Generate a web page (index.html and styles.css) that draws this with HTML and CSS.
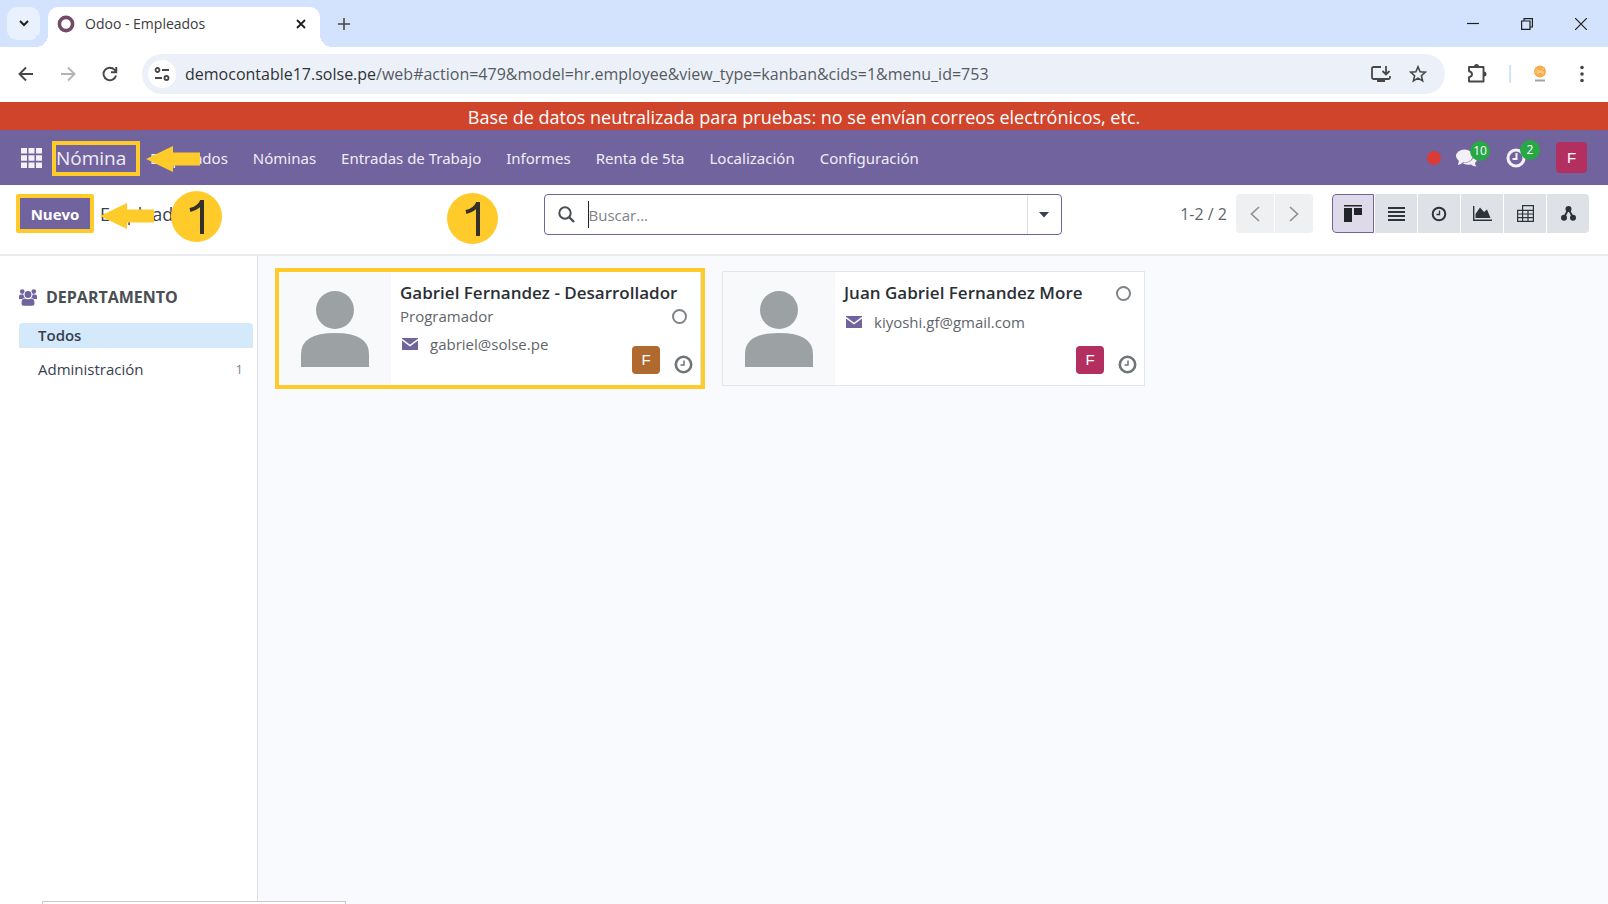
FILE: index.html
```html
<!DOCTYPE html>
<html lang="es">
  <head>
    <meta charset="UTF-8" />
    <meta name="viewport" content="width=device-width, initial-scale=1.0" />
    <title>Odoo - Empleados</title>
    <link rel="stylesheet" href="styles.css">
  </head>
  <body>
    <div class="tab-strip">
      <button class="tab-search" aria-label="Buscar pestañas">
        <svg width="10" height="7" viewBox="0 0 10 7"><path d="M1 1l4 4 4-4" fill="none" stroke="#1f1f1f" stroke-width="2"/></svg>
      </button>
      <div class="tab">
        <svg width="18" height="18" viewBox="0 0 18 18"><circle cx="9" cy="9" r="6.6" fill="none" stroke="#714b67" stroke-width="3.6"/></svg>
        <span class="tab-title">Odoo - Empleados</span>
        <button class="icon-button" aria-label="Cerrar pestaña">
          <svg width="10" height="10" viewBox="0 0 10 10"><path d="M1 1l8 8M9 1L1 9" stroke="#1f1f1f" stroke-width="1.8"/></svg>
        </button>
      </div>
      <button class="icon-button new-tab" aria-label="Nueva pestaña">
        <svg width="12" height="12" viewBox="0 0 12 12"><path d="M6 0v12M0 6h12" stroke="#474747" stroke-width="1.6"/></svg>
      </button>
      <div class="window-controls">
        <button class="icon-button" aria-label="Minimizar">
          <svg width="12" height="12" viewBox="0 0 12 12"><path d="M0 5.5h12" stroke="#1f1f1f" stroke-width="1.2"/></svg>
        </button>
        <button class="icon-button" aria-label="Restaurar">
          <svg width="12" height="12" viewBox="0 0 12 12"><path d="M.6 3h8.4v8.4H.6zM3 3V.6h8.4V9H9" fill="none" stroke="#1f1f1f" stroke-width="1.2"/></svg>
        </button>
        <button class="icon-button" aria-label="Cerrar">
          <svg width="12" height="12" viewBox="0 0 12 12"><path d="M0 0l12 12M12 0L0 12" stroke="#1f1f1f" stroke-width="1.2"/></svg>
        </button>
      </div>
    </div>

    <div class="toolbar">
      <div class="toolbar-nav">
        <button class="icon-button" aria-label="Atrás">
          <svg width="16" height="16" viewBox="0 0 16 16"><path d="M15 8H2M8 1.5L1.5 8 8 14.5" fill="none" stroke="#474747" stroke-width="1.9"/></svg>
        </button>
        <button class="icon-button" aria-label="Adelante">
          <svg width="16" height="16" viewBox="0 0 16 16"><path d="M1 8h13M8 1.5L14.5 8 8 14.5" fill="none" stroke="#b4b4b4" stroke-width="1.9"/></svg>
        </button>
        <button class="icon-button" aria-label="Recargar">
          <svg width="16" height="16" viewBox="0 0 16 16"><path d="M14 9.5A6.3 6.3 0 1 1 12.6 3.8L14 5.4M14.3 1v5.2H9" fill="none" stroke="#474747" stroke-width="1.9"/></svg>
        </button>
      </div>
      <div class="address-bar">
        <button class="site-info" aria-label="Información del sitio">
          <svg width="16" height="14" viewBox="0 0 16 14"><g fill="none" stroke="#474747" stroke-width="1.8"><circle cx="3.5" cy="3" r="2"/><path d="M8 3h7M1 11h7"/><circle cx="12.5" cy="11" r="2"/></g></svg>
        </button>
        <div class="url">democontable17.solse.pe<span class="url-path">/web#action=479&amp;model=hr.employee&amp;view_type=kanban&amp;cids=1&amp;menu_id=753</span></div>
        <button class="icon-button" aria-label="Instalar">
          <svg width="20" height="18" viewBox="0 0 20 18"><g fill="none" stroke="#474747" stroke-width="1.8"><path d="M10 2H2.5Q1 2 1 3.5v9Q1 14 2.5 14h15Q19 14 19 12.5V11M15 1v8M11.5 6L15 9.4 18.5 6"/></g><path d="M6 14h8v3H6z" fill="#474747"/></svg>
        </button>
        <button class="icon-button" aria-label="Marcador">
          <svg width="18" height="18" viewBox="0 0 18 18"><path d="M9 1.8l2.1 4.9 5.3.5-4 3.5 1.2 5.2L9 13.1l-4.6 2.8 1.2-5.2-4-3.5 5.3-.5z" fill="none" stroke="#474747" stroke-width="1.6"/></svg>
        </button>
      </div>
      <div class="toolbar-end">
        <button class="icon-button" aria-label="Extensiones">
          <svg width="20" height="20" viewBox="0 0 20 20"><path d="M2 3h14.5v14.5H2v-4.3q3-.7 3-3T2 7.2z" fill="none" stroke="#474747" stroke-width="1.9" stroke-linejoin="round"/><path d="M7 2.5a2.5 2.5 0 0 1 5 0M17 7.5a2.5 2.5 0 0 1 0 5" fill="#474747"/></svg>
        </button>
        <span class="toolbar-divider"></span>
        <svg width="14" height="18" viewBox="0 0 14 18"><circle cx="7" cy="6.5" r="6" fill="#f6ad4b"/><path d="M3 4l8 5M4 9l7-6M2 7h9" stroke="#fbd090" stroke-width="1"/><path d="M2 15.5h10" stroke="#a3a3a3" stroke-width="2"/></svg>
        <button class="icon-button browser-menu" aria-label="Menú">
          <svg width="4" height="18" viewBox="0 0 4 18"><g fill="#474747"><circle cx="2" cy="2.5" r="1.8"/><circle cx="2" cy="9" r="1.8"/><circle cx="2" cy="15.5" r="1.8"/></g></svg>
        </button>
      </div>
    </div>

    <div class="neutralize-banner">Base de datos neutralizada para pruebas: no se envían correos electrónicos, etc.</div>

    <header class="navbar">
      <button class="icon-button apps" aria-label="Aplicaciones">
        <svg width="21" height="20" viewBox="0 0 21 20"><path d="M0 0h6v5.500H0zM7.500 0h6v5.500h-6zM15 0h6v5.500h-6zM0 7.200h6v5.500H0zM7.500 7.200h6v5.500h-6zM15 7.200h6v5.500h-6zM0 14.500h6V20H0zM7.500 14.500h6V20h-6zM15 14.500h6V20h-6z" fill="#f3f0f8"/></svg>
      </button>
      <a class="brand" href="#">Nómina</a>
      <nav class="menu">
        <a class="menu-item" href="#">Empleados
          <svg class="arrow" width="54" height="26" viewBox="0 0 54 26"><path d="M0 13L27 0v6.5h27v13H27V26z" fill="#ffcb2b"/></svg>
        </a>
        <a class="menu-item" href="#">Nóminas</a>
        <a class="menu-item" href="#">Entradas de Trabajo</a>
        <a class="menu-item" href="#">Informes</a>
        <a class="menu-item" href="#">Renta de 5ta</a>
        <a class="menu-item" href="#">Localización</a>
        <a class="menu-item" href="#">Configuración</a>
      </nav>
      <div class="systray">
        <span class="record-dot"></span>
        <button class="icon-button tray-item" aria-label="Mensajes">
          <svg width="21" height="18" viewBox="0 0 21 18"><g fill="#f3f0f8"><ellipse cx="8.5" cy="7" rx="8.5" ry="6.5"/><path d="M3 11l-1 5q4-1 6-4z"/><path d="M18.5 5.5q2.500 2 2.500 4.500t-2 4q0 2 1.500 3.500-3.500 0-5.500-2-6 .8-8.500-1.500 11 0 12-8.500z"/></g></svg>
          <span class="badge">10</span>
        </button>
        <button class="icon-button tray-item" aria-label="Actividades">
          <svg width="20" height="20" viewBox="0 0 20 20"><g fill="none" stroke="#f3f0f8"><circle cx="10" cy="10" r="8" stroke-width="3"/><path d="M10.5 5v6H6.500" stroke-width="2"/></g></svg>
          <span class="badge">2</span>
        </button>
        <button class="avatar user-avatar">F</button>
      </div>
    </header>

    <div class="control-panel">
      <div class="breadcrumbs">
        <button class="create-button">Nuevo</button>
        <span class="title">Empleados</span>
        <svg class="arrow" width="54" height="26" viewBox="0 0 54 26"><path d="M0 13L27 0v6.5h27v13H27V26z" fill="#ffcb2b"/></svg>
        <span class="step step-create"><svg width="16" height="36" viewBox="0 0 16 36"><path d="M13 1v34M13 2q-3 7-12 9" fill="none" stroke="#33312a" stroke-width="4"/></svg></span>
        <span class="step step-search"><svg width="16" height="36" viewBox="0 0 16 36"><path d="M13 1v34M13 2q-3 7-12 9" fill="none" stroke="#33312a" stroke-width="4"/></svg></span>
      </div>
      <div class="search">
        <svg width="17" height="17" viewBox="0 0 17 17"><circle cx="7" cy="7" r="5.7" fill="none" stroke="#4a4f55" stroke-width="2"/><path d="M11 11l5 5" stroke="#4a4f55" stroke-width="2.4"/></svg>
        <input class="search-input" type="text" placeholder="Buscar..." aria-label="Buscar">
        <button class="search-toggle" aria-label="Filtros">
          <svg width="10" height="6" viewBox="0 0 10 6"><path d="M0 0h10L5 5.5z" fill="#374151"/></svg>
        </button>
      </div>
      <div class="panel-end">
        <span class="pager-value">1-2 / 2</span>
        <div class="pager">
          <button class="pager-button" aria-label="Anterior"><svg width="10" height="16" viewBox="0 0 10 16"><path d="M9 1L1.5 8 9 15" fill="none" stroke="#8f9296" stroke-width="1.7"/></svg></button>
          <button class="pager-button" aria-label="Siguiente"><svg width="10" height="16" viewBox="0 0 10 16"><path d="M1 1l7.5 7L1 15" fill="none" stroke="#8f9296" stroke-width="1.7"/></svg></button>
        </div>
        <div class="views">
          <button class="view-button active" aria-label="Kanban"><svg width="18" height="17" viewBox="0 0 18 17"><path d="M0 0h18v1.500H0zM0 3h8v14H0zM10 3h8v7h-8z" fill="#212529"/></svg></button>
          <button class="view-button" aria-label="Lista"><svg width="17" height="14" viewBox="0 0 17 14"><path d="M0 1h17M0 5h17M0 9h17M0 13h17" stroke="#2d3338" stroke-width="2"/></svg></button>
          <button class="view-button" aria-label="Actividad"><svg width="16" height="16" viewBox="0 0 16 16"><g fill="none" stroke="#2d3338"><circle cx="8" cy="8" r="6.3" stroke-width="2"/><path d="M8.5 4.5v4H5.500" stroke-width="1.3"/></g></svg></button>
          <button class="view-button" aria-label="Gráfico"><svg width="19" height="15" viewBox="0 0 19 15"><path d="M.7 0v14.2H19" fill="none" stroke="#2d3338" stroke-width="1.4"/><path d="M2.5 12V8L7 1.500 11 6l3-2.500L17.500 12z" fill="#2d3338"/></svg></button>
          <button class="view-button" aria-label="Tabla dinámica"><svg width="17" height="17" viewBox="0 0 17 17"><path d="M.6 16.400V5.400H5.600V.6H16.400V16.400zM5.600 5.400H16.400M.6 9H16.400M.6 12.700H16.400M5.600 5.400V16.400M11 5.400V16.400" fill="none" stroke="#2d3338" stroke-width="1.2"/></svg></button>
          <button class="view-button" aria-label="Jerarquía"><svg width="15" height="15" viewBox="0 0 15 15"><g fill="#2d3338"><circle cx="7.5" cy="3" r="3"/><circle cx="3" cy="11.8" r="3"/><circle cx="12" cy="11.8" r="3"/></g><path d="M3 11.5L7.5 3l4.500 8.500" fill="none" stroke="#2d3338" stroke-width="1.9"/></svg></button>
        </div>
      </div>
    </div>

    <main class="content">
      <aside class="sidebar">
        <h2 class="sidebar-title">
          <svg width="18" height="17" viewBox="0 0 18 17"><g fill="#71639e"><circle cx="3.2" cy="2.6" r="2.3"/><circle cx="14.8" cy="2.6" r="2.3"/><circle cx="9" cy="5.5" r="3.4"/><path d="M0 9.500V7.300Q0 5.500 1.800 5.500h2.600q.2 2 1.400 3.300-1.500 0-2.500 1.200H1Q0 10 0 9.500zM18 9.500V7.300q0-1.800-1.800-1.800h-2.600q-.2 2-1.400 3.300 1.500 0 2.500 1.200H17q1 0 1-.5z"/><path d="M2.500 14.500Q2.500 9.500 5.500 9.500q3.500 1.500 7 0 3 0 3 5 0 2.200-2.200 2.200H4.700q-2.200 0-2.200-2.200z"/></g></svg>
          DEPARTAMENTO
        </h2>
        <a class="department selected" href="#">Todos</a>
        <a class="department" href="#">Administración <span class="count">1</span></a>
      </aside>
      <section class="kanban">
        <article class="card highlighted">
          <div class="photo"><svg width="68" height="76" viewBox="0 0 68 76"><g fill="#9ca1a3"><circle cx="34" cy="19" r="19"/><path d="M0 76V63Q0 42 34 42t34 21v13z"/></g></svg></div>
          <div class="card-body">
            <div class="card-row"><strong class="name">Gabriel Fernandez - Desarrollador</strong></div>
            <div class="card-row job-row"><span>Programador</span><span class="presence"></span></div>
            <div class="email">
              <svg width="16" height="12" viewBox="0 0 16 12"><path d="M0 0h16v12H0z" fill="#71639e"/><path d="M0 1.5l8 6 8-6" fill="none" stroke="#fff" stroke-width="1.4"/></svg>
              gabriel@solse.pe
            </div>
            <div class="card-footer">
              <span class="avatar orange">F</span>
              <svg width="19" height="19" viewBox="0 0 19 19"><g fill="none" stroke="#6f7577"><circle cx="9.5" cy="9.5" r="7.7" stroke-width="2.6"/><path d="M10 5.5V10H6.500" stroke-width="1.5"/></g></svg>
            </div>
          </div>
        </article>
        <article class="card">
          <div class="photo"><svg width="68" height="76" viewBox="0 0 68 76"><g fill="#9ca1a3"><circle cx="34" cy="19" r="19"/><path d="M0 76V63Q0 42 34 42t34 21v13z"/></g></svg></div>
          <div class="card-body">
            <div class="card-row"><strong class="name">Juan Gabriel Fernandez More</strong><span class="presence"></span></div>
            <div class="email">
              <svg width="16" height="12" viewBox="0 0 16 12"><path d="M0 0h16v12H0z" fill="#71639e"/><path d="M0 1.5l8 6 8-6" fill="none" stroke="#fff" stroke-width="1.4"/></svg>
              kiyoshi.gf@gmail.com
            </div>
            <div class="card-footer">
              <span class="avatar">F</span>
              <svg width="19" height="19" viewBox="0 0 19 19"><g fill="none" stroke="#6f7577"><circle cx="9.5" cy="9.5" r="7.7" stroke-width="2.6"/><path d="M10 5.5V10H6.500" stroke-width="1.5"/></g></svg>
            </div>
          </div>
        </article>
      </section>
    </main>
    <div class="status-edge"></div>
  </body>
</html>
```
FILE: styles.css
```css
:root {
  --purple: #71639e;
  --yellow: #ffcb2b;
  --text: #374151;
  --muted: #5f656b;
  --border: #e3e5e8;
  --pink: #b32f60;
}

* {
  box-sizing: border-box;
}

body {
  position: relative;
  display: flex;
  flex-direction: column;
  min-height: 100vh;
  margin: 0;
  overflow: hidden;
  font-family: "Open Sans", "Noto Sans", sans-serif;
  font-size: 15px;
  line-height: 24px;
  color: var(--text);
  background: #fff;
}

a {
  color: inherit;
  text-decoration: none;
}

button {
  display: flex;
  align-items: center;
  justify-content: center;
  padding: 0;
  border: 0;
  font: inherit;
  color: inherit;
  background: none;
}

svg {
  flex: none;
}

/* browser window */

.tab-strip {
  display: flex;
  align-items: center;
  height: 47px;
  padding-left: 7px;
  background: #d3e3fd;
}

.tab-search {
  width: 33px;
  height: 33px;
  border-radius: 10px;
  background: #e9f1fe;
}

.tab {
  position: relative;
  display: flex;
  align-items: center;
  align-self: flex-end;
  width: 272px;
  height: 40px;
  margin-left: 8px;
  padding: 0 14px 6px 9px;
  border-radius: 10px 10px 0 0;
  background: #fff;
}

.tab::before,
.tab::after {
  content: '';
  position: absolute;
  bottom: 0;
  width: 12px;
  height: 12px;
}

.tab::before {
  right: 100%;
  background: radial-gradient(circle at 0 0, #d3e3fd 12px, #fff 12px);
}

.tab::after {
  left: 100%;
  background: radial-gradient(circle at 100% 0, #d3e3fd 12px, #fff 12px);
}

.tab-title {
  flex: 1;
  margin-left: 10px;
  font-size: 14px;
  color: #3c3c3c;
}

.new-tab {
  margin-left: 18px;
}

.window-controls {
  display: flex;
  gap: 42px;
  margin-left: auto;
  padding-right: 21px;
}

.toolbar {
  display: flex;
  align-items: center;
  height: 55px;
  padding: 0 24px 1px 18px;
  background: #fff;
}

.toolbar-nav {
  display: flex;
  gap: 26px;
  width: 124px;
}

.address-bar {
  display: flex;
  flex: 1;
  align-items: center;
  gap: 18px;
  height: 40px;
  padding: 0 18px 0 6px;
  border-radius: 20px;
  background: #ecf1f9;
}

.site-info {
  width: 28px;
  height: 28px;
  border-radius: 50%;
  background: #fff;
}

.url {
  flex: 1;
  margin-left: -9px;
  font-size: 16px;
  color: #303235;
}

.url-path {
  color: #565a5e;
}

.toolbar-end {
  display: flex;
  align-items: center;
  gap: 22px;
  margin-left: 22px;
}

.toolbar-divider {
  width: 2px;
  height: 18px;
  background: #d3e3fd;
}

.browser-menu {
  margin-left: 11px;
}

/* odoo header */

.neutralize-banner {
  height: 28px;
  font-size: 18px;
  line-height: 30px;
  text-align: center;
  color: #fff;
  background: #d0442c;
}

.navbar {
  display: flex;
  align-items: center;
  height: 55px;
  padding: 0 21px;
  color: #f0edf6;
  background: var(--purple);
}

.brand {
  width: 88px;
  height: 35px;
  margin: 2px 0 0 10px;
  border: 4px solid var(--yellow);
  font-size: 19px;
  line-height: 27px;
}

.menu {
  display: flex;
  gap: 25px;
  margin-left: 10px;
  font-family: "Noto Sans", sans-serif;
}

.menu-item {
  position: relative;
}

.arrow {
  position: absolute;
  top: 0;
  left: -4px;
}

.systray {
  display: flex;
  align-items: center;
  margin-left: auto;
}

.record-dot {
  width: 14px;
  height: 14px;
  margin-right: 15px;
  border-radius: 50%;
  background: #d93b37;
}

.tray-item {
  position: relative;
  width: 50px;
  justify-content: flex-start;
}

.badge {
  position: absolute;
  top: -8px;
  left: 14px;
  min-width: 20px;
  padding: 0 3px;
  border-radius: 10px;
  font-size: 12px;
  line-height: 20px;
  color: #fff;
  background: #28a745;
}

.avatar {
  display: flex;
  align-items: center;
  justify-content: center;
  width: 28px;
  height: 28px;
  border-radius: 4px;
  font-family: "Liberation Sans", sans-serif;
  color: #fff;
  background: var(--pink);
}

.avatar.orange {
  background: #b06a30;
}

.user-avatar {
  width: 31px;
  height: 31px;
}

/* control panel */

.control-panel {
  display: flex;
  align-items: flex-start;
  height: 71px;
  padding: 9px 19px 0 16px;
  border-bottom: 2px solid #e9ebee;
}

.breadcrumbs {
  position: relative;
  display: flex;
  flex: 1;
  align-items: center;
  gap: 6px;
}

.breadcrumbs .arrow {
  top: 9px;
  left: 84px;
}

.create-button {
  width: 78px;
  height: 39px;
  border: 4px solid var(--yellow);
  border-radius: 2px;
  font-weight: 700;
  color: #fff;
  background: var(--purple);
}

.title {
  font-size: 18px;
}

.step {
  position: absolute;
  display: flex;
  align-items: center;
  justify-content: center;
  width: 51px;
  height: 51px;
  border-radius: 50%;
  background: var(--yellow);
}

.step-create {
  top: -3px;
  left: 155px;
}

.step-search {
  top: -1px;
  left: 431px;
}

.search {
  display: flex;
  align-items: center;
  width: 518px;
  height: 41px;
  padding-left: 13px;
  border: 1px solid var(--purple);
  border-radius: 4px;
}

.search-input {
  flex: 1;
  align-self: stretch;
  margin: 6px 0 6px 13px;
  padding: 0;
  border: 0;
  border-left: 1px solid #212529;
  font: inherit;
  color: var(--text);
  background: none;
  outline: 0;
}

.search-input::placeholder {
  color: #7d8388;
  opacity: 1;
}

.search-toggle {
  align-self: stretch;
  width: 34px;
  border-left: 1px solid #dcdfe3;
}

.panel-end {
  display: flex;
  flex: 1;
  align-items: center;
  justify-content: flex-end;
}

.pager-value {
  margin-right: 9px;
  font-size: 16px;
  color: var(--muted);
}

.pager,
.views {
  display: flex;
  gap: 1px;
  overflow: hidden;
  border-radius: 4px;
}

.pager-button {
  width: 38px;
  height: 39px;
  background: #eff0f2;
}

.views {
  margin-left: 19px;
}

.view-button {
  width: 42px;
  height: 39px;
  background: #dee1e5;
}

.view-button.active {
  border: 1px solid var(--purple);
  border-radius: 4px 0 0 4px;
  background: #dedaea;
}

/* content */

.content {
  display: flex;
  flex: 1;
}

.sidebar {
  width: 258px;
  padding: 29px 4px 0 19px;
  border-right: 1px solid #dee2e6;
}

.sidebar-title {
  display: flex;
  align-items: center;
  gap: 9px;
  margin: 0 0 14px;
  font-size: 16px;
  color: #4a4f55;
}

.department {
  display: flex;
  justify-content: space-between;
  margin-bottom: 9px;
  padding: 0 10px 0 19px;
}

.department.selected {
  border-radius: 4px 4px 0 0;
  font-weight: 600;
  line-height: 25px;
  background: #d4e9f9;
}

.count {
  font-size: 13px;
  color: #7d8388;
}

.kanban {
  display: grid;
  flex: 1;
  grid-template-columns: repeat(3, 1fr);
  gap: 21px;
  align-content: start;
  padding: 15px 19px 15px 20px;
  background: #f8fafd;
}

.card {
  position: relative;
  display: flex;
  height: 115px;
  border: 1px solid var(--border);
  background: #fff;
}

.highlighted::after {
  content: '';
  position: absolute;
  inset: -4px -5px -4px -4px;
  border: 4px solid var(--yellow);
}

.photo {
  display: flex;
  align-items: center;
  justify-content: center;
  width: 112px;
  background: #f8f9fb;
}

.card-body {
  display: flex;
  flex: 1;
  flex-direction: column;
  padding: 9px;
}

.card-row {
  display: flex;
  align-items: center;
  justify-content: space-between;
  padding-right: 4px;
}

.name {
  font-size: 17px;
  font-weight: 600;
  color: #2b3036;
}

.job-row {
  line-height: 22px;
  color: var(--muted);
}

.presence {
  width: 15px;
  height: 15px;
  border: 2px solid #7d8388;
  border-radius: 50%;
}

.email {
  display: flex;
  align-items: center;
  gap: 12px;
  margin-top: 5px;
  padding-left: 2px;
  color: var(--muted);
}

.card-footer {
  position: absolute;
  right: 7px;
  bottom: 11px;
  display: flex;
  align-items: flex-end;
  gap: 14px;
}

/* edge of the link preview at the bottom of the window */
.status-edge {
  position: absolute;
  bottom: 0;
  left: 42px;
  width: 304px;
  height: 3px;
  border: 1px solid #c8cacc;
  border-bottom: 0;
  background: #fff;
}
```
